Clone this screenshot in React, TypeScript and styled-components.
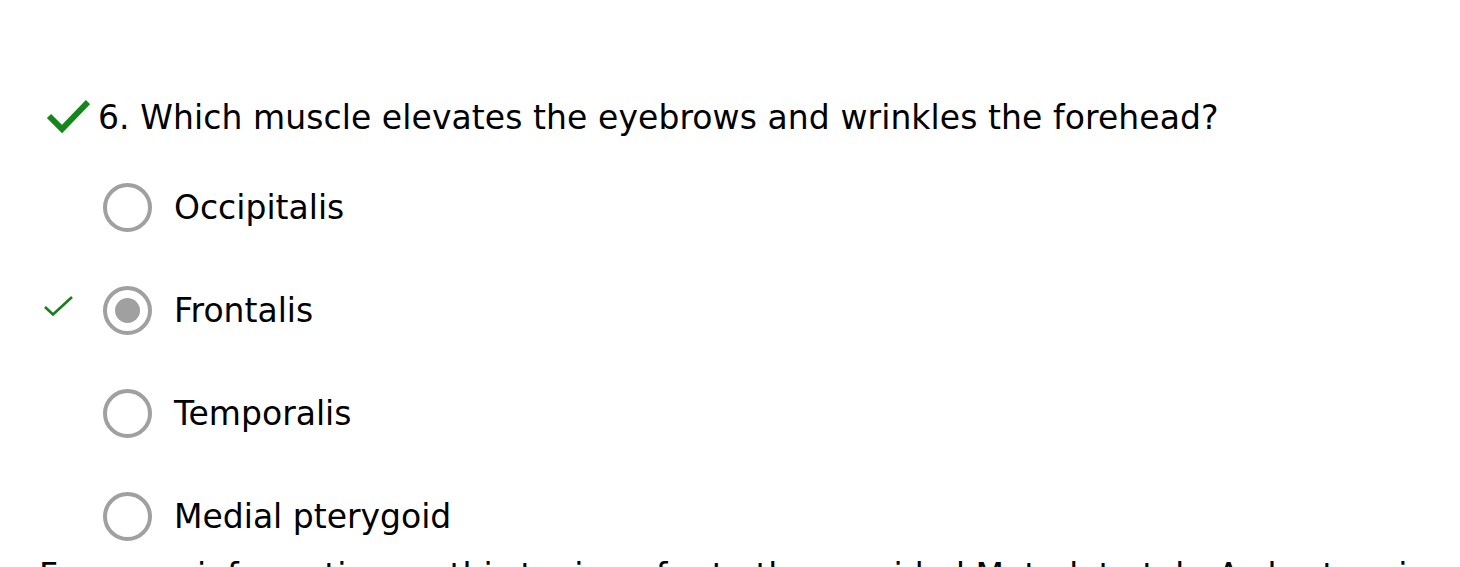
import React from 'react';
import styled, { createGlobalStyle } from 'styled-components';

const GlobalStyle = createGlobalStyle`
	html, body {
		margin: 0;
		padding: 0;
		background: #ffffff;
		overflow: hidden;
	}
	body {
		font-family: 'DejaVu Sans', Verdana, sans-serif;
		color: #000000;
	}
`;

const Page = styled.div`
	padding-top: 99px;
	width: 1460px;
	height: 567px;
	box-sizing: border-box;
	overflow: hidden;
`;

const QuestionRow = styled.div`
	display: flex;
	align-items: center;
	padding-left: 46px;
	gap: 8px;
`;

const CheckIcon = styled.svg`
	flex-shrink: 0;
	margin-top: -5px;
`;

const QuestionText = styled.h2`
	margin: 0;
	font-size: 33px;
	font-weight: normal;
	line-height: 38px;
	letter-spacing: 0.08px;
`;

const OptionList = styled.ul`
	list-style: none;
	margin: 46px 0 0;
	padding: 0 0 0 43px;
	display: flex;
	flex-direction: column;
	gap: 54px;
`;

const OptionRow = styled.li`
	display: flex;
	align-items: center;
	height: 49px;
`;

const MarkerSlot = styled.span`
	width: 60px;
	display: flex;
	align-items: center;
	margin-top: -10px;
`;

const Radio = styled.span<{ $checked: boolean }>`
	width: 49px;
	height: 49px;
	box-sizing: border-box;
	border-radius: 50%;
	border: 4.5px solid #a0a0a0;
	display: flex;
	align-items: center;
	justify-content: center;
	flex-shrink: 0;

	&::after {
		content: '';
		display: ${({ $checked }) => ($checked ? 'block' : 'none')};
		width: 25px;
		height: 25px;
		border-radius: 50%;
		background: #a0a0a0;
	}
`;

const OptionLabel = styled.span`
	margin-left: 22px;
	font-size: 33px;
	line-height: 38px;
`;

const Footer = styled.p`
	margin: 16px 0 0;
	padding-left: 39px;
	font-size: 33px;
	line-height: 38px;
	white-space: nowrap;
`;

const BigCheck = () => (
	<CheckIcon width="44" height="34" viewBox="0 0 44 34" aria-hidden="true">
		<path d="M3 17 L16 30 L42 3" fill="none" stroke="#15871a" strokeWidth="6" />
	</CheckIcon>
);

const SmallCheck = () => (
	<svg width="31" height="22" viewBox="0 0 31 22" aria-hidden="true">
		<path d="M2 12 L10 19.5 L29 2" fill="none" stroke="#15801a" strokeWidth="2.6" />
	</svg>
);

const options = [
	{ label: 'Occipitalis', checked: false },
	{ label: 'Frontalis', checked: true },
	{ label: 'Temporalis', checked: false },
	{ label: 'Medial pterygoid', checked: false },
];

export default function App() {
	return (
		<>
			<GlobalStyle />
			<Page>
				<QuestionRow>
					<BigCheck />
					<QuestionText>6. Which muscle elevates the eyebrows and wrinkles the forehead?</QuestionText>
				</QuestionRow>
				<OptionList>
					{options.map((o) => (
						<OptionRow key={o.label}>
							<MarkerSlot>{o.checked && <SmallCheck />}</MarkerSlot>
							<Radio $checked={o.checked} />
							<OptionLabel>{o.label}</OptionLabel>
						</OptionRow>
					))}
				</OptionList>
				<Footer>For more information on this topic, refer to the provided Metadata tab. A short review follows.</Footer>
			</Page>
		</>
	);
}
